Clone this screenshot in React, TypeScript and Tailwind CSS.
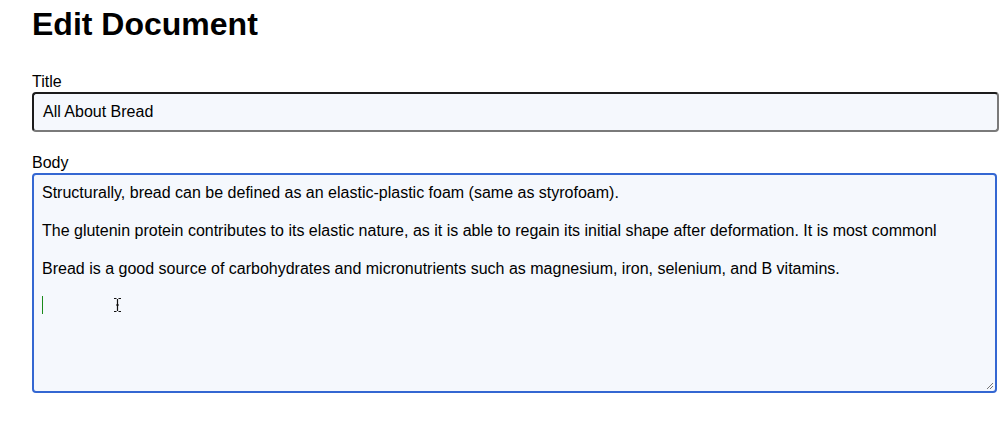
import React from "react";

const paragraphs = [
  "Structurally, bread can be defined as an elastic-plastic foam (same as styrofoam).",
  "The glutenin protein contributes to its elastic nature, as it is able to regain its initial shape after deformation. It is most commonl",
  "Bread is a good source of carbohydrates and micronutrients such as magnesium, iron, selenium, and B vitamins.",
];

function IBeam() {
  return (
    <svg width="9" height="16" viewBox="0 0 9 16" className="absolute left-[79px] top-[122px]">
      <path d="M1 1.5h2.5M5.5 1.5H8M4.5 2v12M1 14.5h2.5M5.5 14.5H8M3 8h3" stroke="#111" strokeWidth="1.2" fill="none" />
    </svg>
  );
}

function Grip() {
  return (
    <svg width="9" height="9" viewBox="0 0 9 9" className="absolute right-[1px] bottom-[1px]">
      <path d="M8 2L2 8M8 5L5 8" stroke="#777" strokeWidth="1" />
    </svg>
  );
}

export default function App() {
  return (
    <div className="min-h-[425px] bg-white pl-8 font-['Liberation_Sans',Arial,sans-serif] text-black">
      <h1 className="mt-[5px] text-[32px] font-bold leading-[38px]">Edit Document</h1>

      <div className="mt-[29px] text-[16px] leading-[19px]">Title</div>
      <div className="mt-[1px] flex h-[40px] w-[967px] items-center rounded-[4px] border-2 border-t-[#1c1c1c] border-l-[#1c1c1c] border-r-[#7a7a7a] border-b-[#7a7a7a] bg-[#f5f8fd] pl-[9px] text-[16px]">
        All About Bread
      </div>

      <div className="mt-[21px] text-[16px] leading-[19px]">Body</div>
      <div className="relative mt-[1px] h-[220px] w-[965px] overflow-hidden rounded-[4px] border-2 border-[#3467d2] bg-[#f5f8fd] pl-[8px] pt-[7px] text-[16px] leading-[22px]">
        {paragraphs.map((p, i) => (
          <p key={i} className="mb-[16px] whitespace-nowrap">{p}</p>
        ))}
        <div className="h-[18px] w-[1px] bg-[#1a8a1a]" />
        <IBeam />
        <Grip />
      </div>
    </div>
  );
}
